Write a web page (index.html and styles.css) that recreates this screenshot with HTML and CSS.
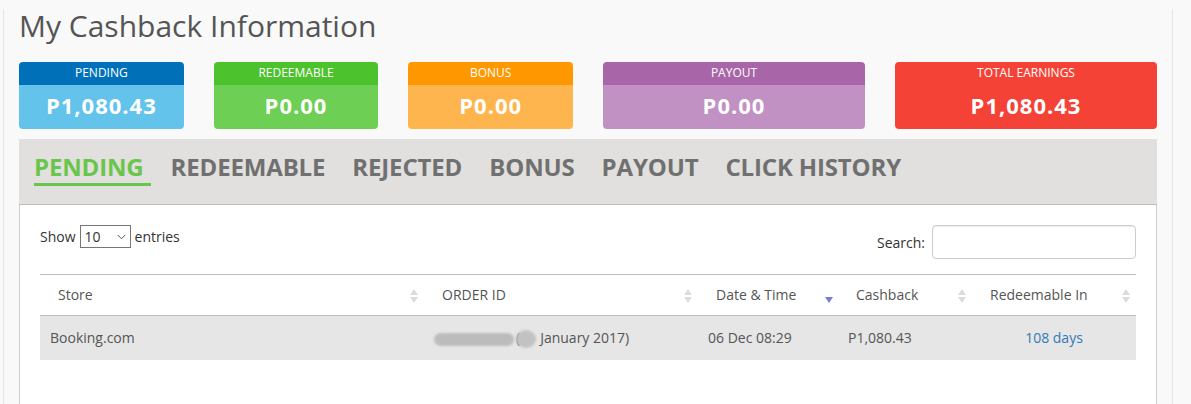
FILE: index.html
```html
<!DOCTYPE html>
<html lang="en">
<head>
<meta charset="utf-8">
<title>My Cashback Information</title>
<link rel="stylesheet" href="styles.css">
</head>
<body>
<div class="page">
  <h1 class="title">My Cashback Information</h1>

  <div class="cards">
    <div class="card card-pending">
      <div class="card-head">PENDING</div>
      <div class="card-body">P1,080.43</div>
    </div>
    <div class="card card-redeem">
      <div class="card-head">REDEEMABLE</div>
      <div class="card-body">P0.00</div>
    </div>
    <div class="card card-bonus">
      <div class="card-head">BONUS</div>
      <div class="card-body">P0.00</div>
    </div>
    <div class="card card-payout">
      <div class="card-head">PAYOUT</div>
      <div class="card-body">P0.00</div>
    </div>
    <div class="card card-total">
      <div class="card-head">TOTAL EARNINGS</div>
      <div class="card-body">P1,080.43</div>
    </div>
  </div>

  <div class="tabs">
    <a class="tab active">PENDING</a>
    <a class="tab">REDEEMABLE</a>
    <a class="tab">REJECTED</a>
    <a class="tab">BONUS</a>
    <a class="tab">PAYOUT</a>
    <a class="tab">CLICK HISTORY</a>
  </div>

  <div class="panel">
    <div class="controls">
      <label class="length">Show
        <span class="select-wrap">
          <select class="length-select">
            <option>10</option>
            <option>25</option>
            <option>50</option>
            <option>100</option>
          </select>
          <svg class="chevron" width="9" height="6" viewBox="0 0 9 6"><path d="M0.8 1 L4.5 4.8 L8.2 1" fill="none" stroke="#555" stroke-width="1"/></svg>
        </span>
        entries</label>
      <label class="search">Search:<input class="search-input" type="search"></label>
    </div>

    <table class="data">
      <colgroup>
        <col class="c1"><col class="c2"><col class="c3"><col class="c4"><col class="c5">
      </colgroup>
      <thead>
        <tr>
          <th class="sort">Store</th>
          <th class="sort">ORDER ID</th>
          <th class="sort-desc">Date &amp; Time</th>
          <th class="sort">Cashback</th>
          <th class="sort">Redeemable In</th>
        </tr>
      </thead>
      <tbody>
        <tr>
          <td>Booking.com</td>
          <td><span class="redact-bar"></span>(<span class="redact-dot"></span>January 2017)</td>
          <td>06 Dec 08:29</td>
          <td>P1,080.43</td>
          <td class="center"><a class="link">108 days</a></td>
        </tr>
      </tbody>
    </table>
  </div>
</div>
</body>
</html>
```

FILE: styles.css
```css
* { box-sizing: border-box; }

html, body {
  margin: 0;
  padding: 0;
  background: #f9f9f9;
  font-family: "Open Sans", "Liberation Sans", sans-serif;
  color: #555;
  font-size: 14px;
}

.page {
  margin-left: 3px;
  width: 1170px;
  border-left: 1px solid #e6e6e6;
  border-right: 1px solid #e6e6e6;
  padding: 0 15px;
  min-height: 404px;
}

.title {
  margin: 9px 0 20px;
  font-size: 30px;
  line-height: 33px;
  font-weight: 400;
  color: #555;
}

/* summary cards */
.cards {
  display: grid;
  grid-template-columns: 2fr 2fr 2fr 3fr 3fr;
  margin: 0 -15px;
}

.card {
  margin: 0 15px;
  border-radius: 4px;
  overflow: hidden;
  color: #fff;
  text-align: center;
}

.card-head {
  height: 23px;
  font-size: 12px;
  line-height: 21px;
  padding-bottom: 2px;
}

.card-body {
  height: 44px;
  font-size: 22px;
  font-weight: 700;
  letter-spacing: 1px;
  line-height: 40px;
  padding-bottom: 4px;
}

.card-pending .card-head { background: #0071b9; }
.card-pending .card-body { background: #63c3eb; }
.card-redeem .card-head { background: #4cc22c; }
.card-redeem .card-body { background: #6dcf53; }
.card-bonus .card-head { background: #ff9800; }
.card-bonus .card-body { background: #ffb54d; }
.card-payout .card-head { background: #a866a8; }
.card-payout .card-body { background: #c291c4; }
.card-total .card-head,
.card-total .card-body { background: #f44336; }

/* tabs */
.tabs {
  margin-top: 10px;
  background: #e1e0de;
  border-bottom: 1px solid #bdbdbd;
  padding: 13px 15px 16px;
  display: flex;
  height: 66px;
}

.tab {
  font-size: 24px;
  font-weight: 700;
  letter-spacing: -0.15px;
  line-height: 30px;
  color: #707070;
  padding: 0 7px 1px 0;
  margin-right: 20px;
  border-bottom: 3px solid transparent;
  text-decoration: none;
  height: 34px;
}

.tab.active {
  color: #6ac64a;
  border-bottom-color: #6ac64a;
}

/* panel */
.panel {
  background: #fff;
  border-left: 1px solid #cfcfcf;
  border-right: 1px solid #cfcfcf;
  padding: 20px 20px 60px;
}

.controls {
  display: flex;
  justify-content: space-between;
  align-items: flex-start;
  height: 34px;
}

.length {
  display: flex;
  align-items: center;
  height: 23px;
  color: #333;
  font-size: 14px;
}

.select-wrap {
  position: relative;
  display: inline-block;
  width: 51px;
  height: 23px;
  margin: 0 4px;
}

.length-select {
  -webkit-appearance: none;
  appearance: none;
  width: 51px;
  height: 23px;
  font-family: "Open Sans", "Liberation Sans", sans-serif;
  font-size: 14px;
  color: #333;
  border: 1px solid #767676;
  border-radius: 0;
  background: #fff;
  padding: 0 0 0 4px;
  outline: none;
}

.chevron {
  position: absolute;
  right: 5px;
  top: 9px;
  pointer-events: none;
}

.search {
  display: flex;
  align-items: center;
  height: 34px;
  color: #333;
}

.search-input {
  margin-left: 7px;
  width: 204px;
  height: 34px;
  border: 1px solid #ccc;
  border-radius: 4px;
  box-shadow: inset 0 1px 1px rgba(0,0,0,0.075);
  font-family: inherit;
  font-size: 14px;
  padding: 6px 12px;
}

/* table */
.data {
  margin-top: 15px;
  width: 100%;
  border-collapse: collapse;
  table-layout: fixed;
}

.c1 { width: 384px; }
.c2 { width: 274px; }
.c3 { width: 140px; }
.c4 { width: 134px; }
.c5 { width: 164px; }

.data thead th {
  border-top: 1px solid #bdbdbd;
  border-bottom: 1px solid #bdbdbd;
  padding: 10px 18px;
  line-height: 20px;
  font-weight: 400;
  text-align: left;
  color: #555;
  position: relative;
  white-space: nowrap;
}

.data thead th.sort::before,
.data thead th.sort::after {
  content: "";
  position: absolute;
  right: 6px;
  width: 0;
  height: 0;
  border-left: 4px solid transparent;
  border-right: 4px solid transparent;
}

.data thead th.sort::before {
  top: 14px;
  border-bottom: 6px solid #dcdcdc;
}

.data thead th.sort::after {
  top: 22px;
  border-top: 6px solid #dcdcdc;
}

.data thead th.sort-desc::after {
  content: "";
  position: absolute;
  right: 5px;
  top: 22px;
  width: 0;
  height: 0;
  border-left: 4px solid transparent;
  border-right: 4px solid transparent;
  border-top: 6px solid #7b7bd8;
}

.data tbody td {
  background: #e6e6e6;
  padding: 12px 10px;
  line-height: 20px;
  color: #555;
  white-space: nowrap;
}

.data tbody td.center { text-align: center; }

.link {
  color: #337ab7;
  text-decoration: none;
}

.redact-bar {
  display: inline-block;
  vertical-align: middle;
  width: 80px;
  height: 13px;
  margin-right: 2px;
  border-radius: 7px;
  background: #bcbcbc;
  filter: blur(1.2px);
}

.redact-dot {
  display: inline-block;
  vertical-align: middle;
  width: 20px;
  height: 18px;
  margin: 0 4px 0 -4px;
  border-radius: 50%;
  background: #c2c2c2;
  filter: blur(0.8px);
}
```
